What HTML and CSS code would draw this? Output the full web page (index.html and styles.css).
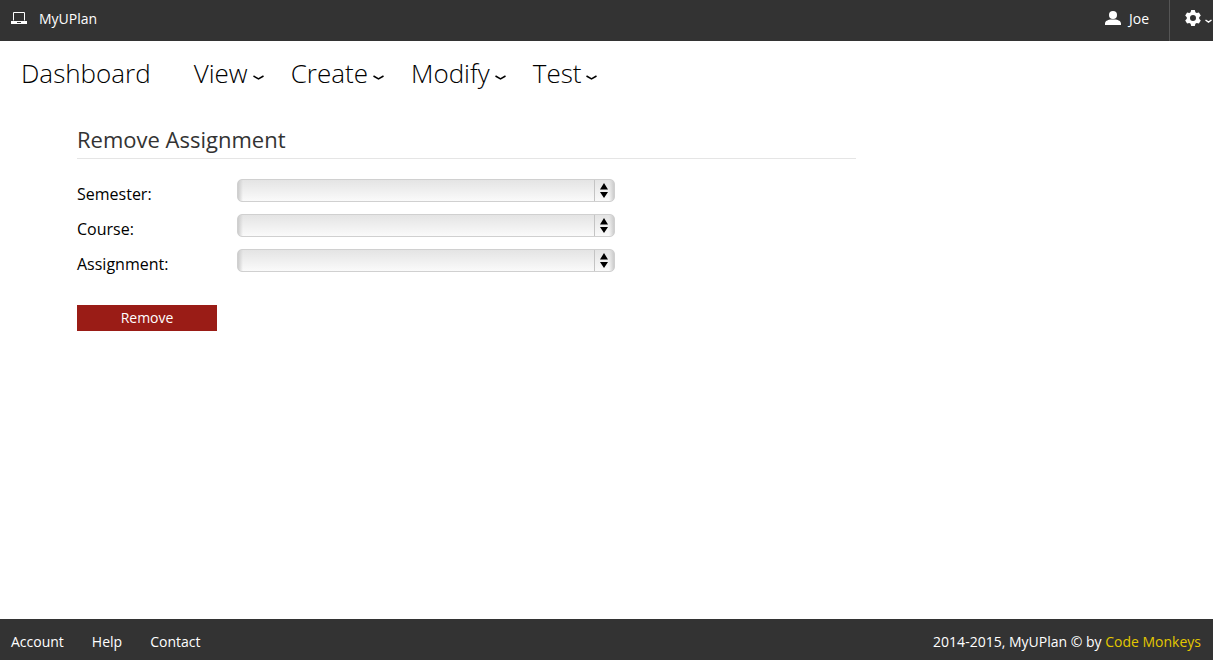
FILE: index.html
```html
<!DOCTYPE html>
<html lang="en">
<head>
<meta charset="utf-8">
<meta name="viewport" content="width=device-width, initial-scale=1">
<title>MyUPlan - Remove Assignment</title>
<link rel="stylesheet" href="styles.css">
</head>
<body>
<header class="topbar">
  <a class="brand" href="#">
    <svg class="icon-laptop" viewBox="0 0 16 12" width="16" height="12" aria-hidden="true"><path d="M2.5 8.5V.5h11v8" fill="none" stroke="#fff"/><path d="M0 9h16v3H0z" fill="#fff"/><path d="M6 10h4v1H6z" fill="#333"/></svg>
    <span>MyUPlan</span>
  </a>
  <div class="account">
    <a class="user" href="#">
      <svg class="icon-user" viewBox="0 0 16 14" width="16" height="14" aria-hidden="true"><circle cx="8" cy="4" r="4" fill="#fff"/><path d="M0 14v-1.500C0 10 2.600 9.300 5 8.500h6c2.400.8 5 1.500 5 4V14z" fill="#fff"/></svg>
      <span>Joe</span>
    </a>
    <button class="settings" type="button" aria-label="Settings">
      <svg viewBox="0 0 16 16" width="16" height="16" aria-hidden="true"><path fill="#fff" fill-rule="evenodd" d="M6.200 0h3.600l.6 2.200 1.300.8 2.200-.6 1.900 3.200L14.200 7.200v1.600l1.600 1.600-1.900 3.200-2.200-.6-1.300.8-.6 2.200H6.200l-.6-2.200-1.300-.8-2.200.6L.2 10.400l1.600-1.600V7.200L.2 5.600l1.900-3.200 2.200.6 1.300-.8zM8 5a3 3 0 1 0 0 6 3 3 0 0 0 0-6z"/></svg>
      <svg class="caret-small" viewBox="0 0 7 4" width="7" height="4" aria-hidden="true"><path d="M.5 1l3 2 3-2" fill="none" stroke="#fff" stroke-width="1.500"/></svg>
    </button>
  </div>
</header>
<nav class="menu" aria-label="Main">
  <a class="menu-home" href="#">Dashboard</a>
  <button type="button">View<svg class="caret" viewBox="0 0 11 5" width="11" height="5" aria-hidden="true"><path d="M.5 1l5 3 5-3"/></svg></button>
  <button type="button">Create<svg class="caret" viewBox="0 0 11 5" width="11" height="5" aria-hidden="true"><path d="M.5 1l5 3 5-3"/></svg></button>
  <button type="button">Modify<svg class="caret" viewBox="0 0 11 5" width="11" height="5" aria-hidden="true"><path d="M.5 1l5 3 5-3"/></svg></button>
  <button type="button">Test<svg class="caret" viewBox="0 0 11 5" width="11" height="5" aria-hidden="true"><path d="M.5 1l5 3 5-3"/></svg></button>
</nav>
<main class="content">
  <h1>Remove Assignment</h1>
  <form class="form">
    <div class="field">
      <label for="semester">Semester:</label>
      <div class="picker"><select id="semester"></select><svg viewBox="0 0 8 15" width="8" height="15" aria-hidden="true"><path d="M4 0l4 6.500H0zM4 15l4-6H0z"/></svg></div>
    </div>
    <div class="field">
      <label for="course">Course:</label>
      <div class="picker"><select id="course"></select><svg viewBox="0 0 8 15" width="8" height="15" aria-hidden="true"><path d="M4 0l4 6.500H0zM4 15l4-6H0z"/></svg></div>
    </div>
    <div class="field">
      <label for="assignment">Assignment:</label>
      <div class="picker"><select id="assignment"></select><svg viewBox="0 0 8 15" width="8" height="15" aria-hidden="true"><path d="M4 0l4 6.500H0zM4 15l4-6H0z"/></svg></div>
    </div>
    <button class="remove" type="button">Remove</button>
  </form>
</main>
<footer class="footer">
  <nav class="footer-links" aria-label="Footer">
    <a href="#">Account</a>
    <a href="#">Help</a>
    <a href="#">Contact</a>
  </nav>
  <p>2014-2015, MyUPlan © by <a class="credit" href="#">Code Monkeys</a></p>
</footer>
</body>
</html>
```
FILE: styles.css
```css
* { box-sizing: border-box; }

body {
  margin: 0;
  min-height: 100vh;
  display: flex;
  flex-direction: column;
  background: #fff;
  color: #000;
  font: 14px/20px "Open Sans", sans-serif;
}

a { color: inherit; text-decoration: none; }

button { border: 0; background: none; color: inherit; font: inherit; cursor: pointer; }

svg { flex: none; }

.topbar {
  display: flex;
  justify-content: space-between;
  height: 41px;
  padding-bottom: 3px;
  background: #333;
  color: #fff;
}

.brand { display: flex; align-items: center; gap: 12px; padding-left: 11px; }

.icon-laptop, .icon-user { margin-bottom: 2px; }

.account { display: flex; margin-bottom: -3px; }

.user { display: flex; align-items: center; gap: 8px; padding: 0 20px 3px 0; }

.settings {
  display: flex;
  align-items: center;
  gap: 4px;
  padding: 0 1px 5px 15px;
  border-left: 1px solid #555;
}

.caret-small { margin-top: 6px; }

.menu {
  display: flex;
  gap: 27px;
  padding: 14px 21px 0;
  font-size: 26px;
  font-weight: 300;
  line-height: 36px;
}

.menu-home { margin-right: 16px; }

.menu button { display: flex; align-items: center; gap: 5px; padding: 0; }

.caret { margin-top: 8px; fill: none; stroke: #000; stroke-width: 1.500; }

.content { flex: 1; width: 100%; max-width: 856px; padding: 32px 0 24px 77px; }

.content h1 {
  margin: 0 0 20px;
  padding-bottom: 3px;
  border-bottom: 1px solid #e5e5e5;
  color: #333;
  font-size: 22px;
  font-weight: 400;
  line-height: 32px;
}

.field { display: flex; height: 35px; font-size: 16px; }

.field label { width: 160px; padding-top: 5px; }

.picker { position: relative; flex: 1; max-width: 378px; height: 23px; }

.picker select {
  appearance: none;
  width: 100%;
  height: 23px;
  border: 1px solid #d0d0d0;
  border-radius: 5px;
  background:
    linear-gradient(90deg, #ccc, transparent 5px, transparent calc(100% - 5px), #ccc),
    linear-gradient(#c4c4c4, #c4c4c4) right 19px top / 1px 100% no-repeat,
    linear-gradient(#e4e4e4, #fafafa);
}

.picker svg { position: absolute; top: 4px; right: 7px; pointer-events: none; }

.remove {
  display: block;
  width: 140px;
  height: 26px;
  margin-top: 21px;
  padding: 0;
  background: #9a1c16;
  color: #fff;
}

.footer {
  display: flex;
  align-items: center;
  justify-content: space-between;
  height: 41px;
  padding: 5px 12px 0 11px;
  background: #333;
  color: #fff;
}

.footer-links { display: flex; gap: 28px; }

.footer p { margin: 0; }

.credit { color: #e3c800; }
```
